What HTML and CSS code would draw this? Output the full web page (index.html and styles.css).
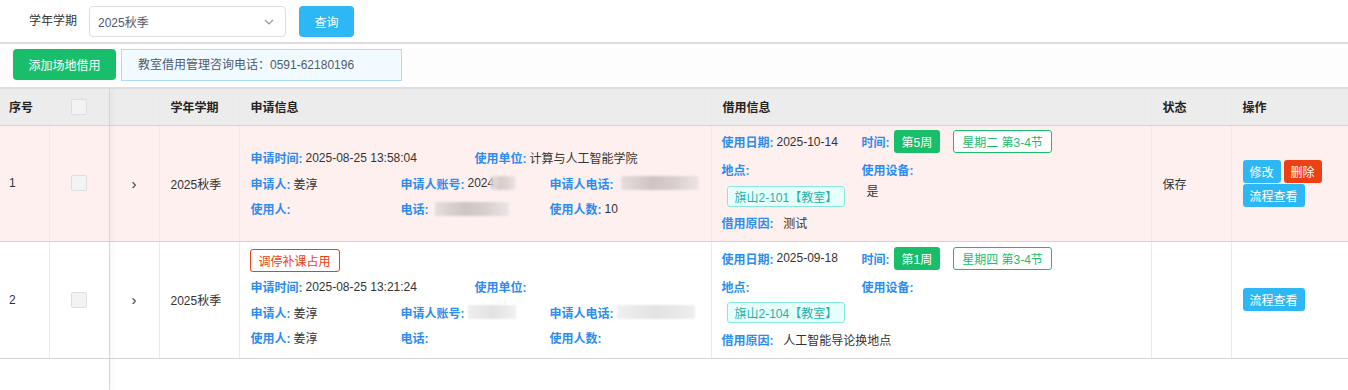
FILE: index.html
```html
<!DOCTYPE html>
<html lang="zh-CN">
<head>
<meta charset="utf-8">
<title>场地借用</title>
<link rel="stylesheet" href="styles.css">
</head>
<body>
<div class="page">
  <div class="search-bar">
    <span class="search-label">学年学期</span>
    <div class="select">
      <span>2025秋季</span>
      <svg class="chev" width="10" height="6" viewBox="0 0 10 6"><path d="M1 1l4 4 4-4" fill="none" stroke="#999" stroke-width="1.2"/></svg>
    </div>
    <button class="btn btn-query">查询</button>
  </div>
  <div class="tool-bar">
    <button class="btn btn-add">添加场地借用</button>
    <div class="notice">教室借用管理咨询电话：0591-62180196</div>
  </div>
  <div class="table-wrap">
    <table class="grid">
      <colgroup>
        <col class="c-no"><col class="c-chk"><col class="c-exp"><col class="c-term"><col class="c-apply"><col class="c-borrow"><col class="c-state"><col class="c-op">
      </colgroup>
      <thead>
        <tr>
          <th class="first">序号</th>
          <th class="center"><span class="checkbox"></span></th>
          <th></th>
          <th>学年学期</th>
          <th>申请信息</th>
          <th>借用信息</th>
          <th>状态</th>
          <th>操作</th>
        </tr>
      </thead>
      <tbody>
        <tr class="row-warn">
          <td class="first">1</td>
          <td class="center"><span class="checkbox"></span></td>
          <td class="center arrow">›</td>
          <td>2025秋季</td>
          <td>
            <div class="apply">
              <div class="line">
                <span class="item w224"><b>申请时间:</b> 2025-08-25 13:58:04</span>
                <span class="item"><b>使用单位:</b> 计算与人工智能学院</span>
              </div>
              <div class="line">
                <span class="item w150"><b>申请人:</b> 姜淳</span>
                <span class="item w149"><b>申请人账号:</b> 2024<span class="blur b-acc1"></span></span>
                <span class="item"><b>申请人电话:</b> <span class="blur b-tel1"></span></span>
              </div>
              <div class="line">
                <span class="item w150"><b>使用人:</b></span>
                <span class="item w149"><b>电话:</b><span class="blur b-ph1"></span></span>
                <span class="item"><b>使用人数:</b> 10</span>
              </div>
            </div>
          </td>
          <td>
            <div class="borrow">
              <div class="cell-a"><b>使用日期:</b> 2025-10-14</div>
              <div class="cell-a"><b>时间:</b><span class="tag tag-green">第5周</span><span class="tag tag-green-line">星期二 第3-4节</span></div>
              <div class="cell-b"><b>地点:</b></div>
              <div class="cell-b"><b>使用设备:</b></div>
              <div class="cell-c"><span class="tag tag-cyan">旗山2-101【教室】</span></div>
              <div class="cell-c"><span class="device">是</span></div>
              <div class="cell-d span2"><b>借用原因:</b>&nbsp; 测试</div>
            </div>
          </td>
          <td>保存</td>
          <td>
            <div class="ops">
              <div class="ops-row"><button class="btn-sm sm-blue">修改</button><button class="btn-sm sm-red">删除</button></div>
              <div class="ops-row"><button class="btn-sm sm-blue">流程查看</button></div>
            </div>
          </td>
        </tr>
        <tr>
          <td class="first">2</td>
          <td class="center"><span class="checkbox"></span></td>
          <td class="center arrow">›</td>
          <td>2025秋季</td>
          <td>
            <div class="apply">
              <span class="tag tag-red-line">调停补课占用</span>
              <div class="line">
                <span class="item w224"><b>申请时间:</b> 2025-08-25 13:21:24</span>
                <span class="item"><b>使用单位:</b></span>
              </div>
              <div class="line">
                <span class="item w150"><b>申请人:</b> 姜淳</span>
                <span class="item w149"><b>申请人账号:</b> <span class="blur b-acc2"></span></span>
                <span class="item"><b>申请人电话:</b> <span class="blur b-tel2"></span></span>
              </div>
              <div class="line">
                <span class="item w150"><b>使用人:</b> 姜淳</span>
                <span class="item w149"><b>电话:</b></span>
                <span class="item"><b>使用人数:</b></span>
              </div>
            </div>
          </td>
          <td>
            <div class="borrow">
              <div class="cell-a"><b>使用日期:</b> 2025-09-18</div>
              <div class="cell-a"><b>时间:</b><span class="tag tag-green">第1周</span><span class="tag tag-green-line">星期四 第3-4节</span></div>
              <div class="cell-b"><b>地点:</b></div>
              <div class="cell-b"><b>使用设备:</b></div>
              <div class="cell-c"><span class="tag tag-cyan">旗山2-104【教室】</span></div>
              <div class="cell-c"></div>
              <div class="cell-d span2"><b>借用原因:</b>&nbsp; 人工智能导论换地点</div>
            </div>
          </td>
          <td></td>
          <td>
            <div class="ops">
              <div class="ops-row"><button class="btn-sm sm-blue">流程查看</button></div>
            </div>
          </td>
        </tr>
      </tbody>
    </table>
    <div class="fixed-shadow"></div>
  </div>
</div>
</body>
</html>
```
FILE: styles.css
```css
* { box-sizing: border-box; }
html, body { margin: 0; padding: 0; }
body {
  font-family: "Liberation Sans", "Noto Sans CJK SC", sans-serif;
  font-size: 12px;
  color: #333;
  background: #fff;
}
.page {
  height: 390px;
  display: flex;
  flex-direction: column;
  overflow: hidden;
}
.search-bar {
  height: 44px;
  display: flex;
  align-items: flex-start;
  padding: 6px 0 0 29px;
  border-bottom: 2px solid #dddee1;
}
.search-label { line-height: 31px; margin-right: 12px; }
.select {
  width: 197px;
  height: 31px;
  border: 1px solid #dcdee2;
  border-radius: 4px;
  display: flex;
  align-items: center;
  justify-content: space-between;
  padding: 0 11px 0 8px;
  color: #515a6e;
}
.chev { margin-top: 1px; }
.btn {
  border: none;
  border-radius: 4px;
  color: #fff;
  font-family: inherit;
  font-size: 12px;
  height: 31px;
  padding: 0;
}
.btn-query { background: #2db7f5; width: 55px; margin-left: 13px; }
.tool-bar {
  height: 45px;
  display: flex;
  align-items: flex-start;
  padding: 5px 0 0 13px;
  border-bottom: 2px solid #dddee1;
  background: #fdfdfe;
}
.btn-add { background: #19be6b; width: 103px; }
.notice {
  margin-left: 5px;
  width: 281px;
  height: 32px;
  background: #f0faff;
  border: 1px solid #abdcff;
  line-height: 30px;
  padding-left: 16px;
  color: #515a6e;
}
.table-wrap {
  position: relative;
  flex: 1;
}
.grid {
  width: 1348px;
  table-layout: fixed;
  border-collapse: collapse;
}
.c-no { width: 49px; }
.c-chk { width: 60px; }
.c-exp { width: 50px; }
.c-term { width: 80px; }
.c-apply { width: 472px; }
.c-borrow { width: 440px; }
.c-state { width: 80px; }
.c-op { width: 117px; }
th, td {
  text-align: left;
  padding: 0 0 0 11px;
  border-right: 1px solid #e8eaec;
  vertical-align: middle;
}
th:last-child, td:last-child { border-right: none; }
th {
  height: 36px;
  background: #ececec;
  font-weight: bold;
  color: #222;
  border-bottom: 1px solid #d4d4d4;
}
td { border-bottom: 1px solid #d4d4d4; }
.first { padding-left: 9px; }
.center { text-align: center; padding: 0; }
.checkbox {
  display: inline-block;
  width: 16px;
  height: 16px;
  border: 1px solid #dcdee2;
  border-radius: 2px;
  background: #f3f3f3;
  vertical-align: middle;
}
.arrow { font-size: 15px; color: #333; }
.row-warn td { background: #fff0f0; }
tbody tr { height: 116px; }
tbody tr + tr { height: 117px; }

.apply { display: flex; flex-direction: column; align-items: flex-start; }
.line { display: flex; height: 25.5px; align-items: center; }
.item { display: inline-flex; align-items: center; white-space: nowrap; }
.item b, .borrow b { color: #2d8cf0; font-weight: bold; margin-right: 3px; }
.w224 { width: 224px; }
.w150 { width: 150px; }
.w149 { width: 149px; }
.blur {
  display: inline-block;
  height: 14px;
  background: linear-gradient(90deg, #e6dddd, #cfc4c4 40%, #d9cfcf 70%, #ede6e6);
  filter: blur(1.2px);
}
.b-acc1 { width: 26px; margin-left: -4px; opacity: .8; }
.b-tel1 { width: 78px; margin-left: 4px; }
.b-ph1 { width: 74px; margin-left: 3px; }
.b-acc2 { width: 48px; background: linear-gradient(90deg, #eee, #e2e2e2 50%, #f0f0f0); }
.b-tel2 { width: 78px; background: linear-gradient(90deg, #f0f0f0, #e2e2e2 50%, #eee); }

.tag {
  display: inline-flex;
  align-items: center;
  border-radius: 3px;
  height: 23px;
  padding: 0 8px;
  white-space: nowrap;
}
.tag-red-line {
  border: 1px solid #ed4014;
  color: #ed4014;
  background: #fff;
  margin-bottom: 2px;
  margin-left: -1px;
}
.tag-green { background: #19be6b; color: #fff; margin-left: 1px; padding: 0 8px; }
.tag-green-line {
  border: 1px solid #19be6b;
  color: #19be6b;
  background: #fff;
  margin-left: 13px;
  padding: 0 8px;
}
.tag-cyan {
  height: 21px;
  border: 1px solid #87e8de;
  background: #e6fffb;
  color: #20b2aa;
  margin-left: 5px;
  padding: 0 7px;
}

.borrow {
  display: grid;
  grid-template-columns: 140px 1fr;
  grid-template-rows: 24px 32px 21px 32px;
  margin-left: -1px;
  margin-top: 2px;
}
.cell-a, .cell-b, .cell-d { display: flex; align-items: center; white-space: nowrap; }
.cell-c { display: flex; align-items: flex-start; }
.span2 { grid-column: 1 / 3; }
.device { margin-left: 5px; line-height: 13px; }

.ops { display: flex; flex-direction: column; gap: 1px; }
.ops-row { display: flex; gap: 3px; }
.btn-sm {
  border: none;
  border-radius: 3px;
  color: #fff;
  font-family: inherit;
  font-size: 12px;
  height: 23px;
  padding: 0 7px;
}
.sm-blue { background: #2db7f5; }
.sm-red { background: #ed4014; }

.fixed-shadow {
  position: absolute;
  left: 109px;
  top: 0;
  bottom: 0;
  width: 1px;
  background: #d6d6d6;
  box-shadow: 2px 0 4px rgba(0, 0, 0, 0.12);
}
```
